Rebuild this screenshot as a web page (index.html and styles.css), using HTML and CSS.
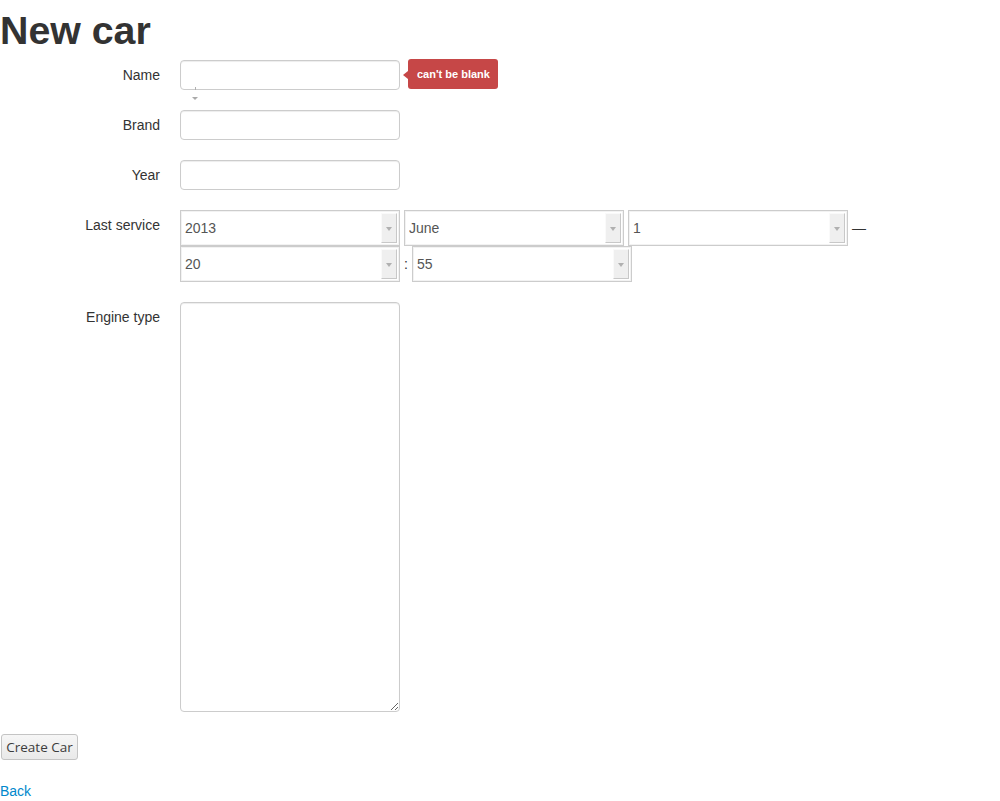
FILE: index.html
```html
<!DOCTYPE html>
<html>
<head>
<meta charset="utf-8">
<title>New car</title>
<link rel="stylesheet" href="styles.css">
</head>
<body>
<h1 class="title">New car</h1>
<form class="form">
  <div class="group">
    <label class="label">Name</label>
    <div class="controls">
      <input class="field" type="text">
      <span class="stray-tick"></span>
      <span class="stray-arrow"></span>
      <span class="tip">can't be blank</span>
    </div>
  </div>
  <div class="group">
    <label class="label">Brand</label>
    <div class="controls"><input class="field" type="text"></div>
  </div>
  <div class="group">
    <label class="label">Year</label>
    <div class="controls"><input class="field" type="text"></div>
  </div>
  <div class="group">
    <label class="label">Last service</label>
    <div class="controls">
      <div class="sel-row">
        <span class="sel"><select class="sel-box"><option>2013</option></select><span class="sel-btn"></span></span>
        <span class="sel"><select class="sel-box"><option>June</option></select><span class="sel-btn"></span></span>
        <span class="sel"><select class="sel-box"><option>1</option></select><span class="sel-btn"></span></span>
        <span class="sep">—</span>
      </div>
      <div class="sel-row">
        <span class="sel"><select class="sel-box"><option>20</option></select><span class="sel-btn"></span></span>
        <span class="sep">:</span>
        <span class="sel"><select class="sel-box"><option>55</option></select><span class="sel-btn"></span></span>
      </div>
    </div>
  </div>
  <div class="group">
    <label class="label">Engine type</label>
    <div class="controls"><textarea class="area"></textarea></div>
  </div>
  <div class="actions"><button class="btn" type="button">Create Car</button></div>
</form>
<p class="back-line"><a class="back" href="#">Back</a></p>
</body>
</html>
```
FILE: styles.css
```css
html, body {
  margin: 0;
  padding: 0;
  background: #fff;
}
body {
  font-family: "Liberation Sans", Arial, sans-serif;
  font-size: 14px;
  line-height: 20px;
  color: #333;
}
.title {
  margin: 10px 0;
  font-size: 39.3px;
  line-height: 40px;
  font-weight: bold;
  color: #333;
}
.form {
  margin: 0;
}
.group {
  display: grid;
  grid-template-columns: 160px 1fr;
  column-gap: 20px;
  margin-bottom: 20px;
}
.label {
  padding-top: 5px;
  text-align: right;
  color: #333;
}
.controls {
  position: relative;
}
.field {
  display: block;
  box-sizing: border-box;
  width: 220px;
  height: 30px;
  margin: 0;
  padding: 4px 6px;
  border: 1px solid #ccc;
  border-radius: 4px;
  box-shadow: inset 0 1px 1px rgba(0,0,0,0.075);
  font-family: "Liberation Sans", Arial, sans-serif;
  font-size: 14px;
  color: #555;
  background: #fff;
}
.stray-tick {
  position: absolute;
  left: 15px;
  top: 27px;
  width: 1px;
  height: 3px;
  background: #b0b0b0;
}
.stray-arrow {
  position: absolute;
  left: 12px;
  top: 37px;
  width: 0;
  height: 0;
  border-left: 3.5px solid transparent;
  border-right: 3.5px solid transparent;
  border-top: 3px solid #aaa;
}
.tip {
  position: absolute;
  left: 228px;
  top: -1px;
  height: 30px;
  padding: 0 8px 0 9px;
  box-sizing: border-box;
  width: 90px;
  background: #c64747;
  border-radius: 3px;
  color: #fff;
  font-weight: bold;
  font-size: 11px;
  line-height: 30px;
  white-space: nowrap;
}
.tip::before {
  content: "";
  position: absolute;
  left: -5px;
  top: 12px;
  border-top: 4px solid transparent;
  border-bottom: 4px solid transparent;
  border-right: 5px solid #c64747;
}
.sel-row {
  display: flex;
  align-items: center;
  gap: 4px;
}
.sel {
  position: relative;
  display: block;
  width: 220px;
  height: 36px;
}
.sel-box {
  -webkit-appearance: none;
  appearance: none;
  display: block;
  box-sizing: border-box;
  width: 220px;
  height: 36px;
  margin: 0;
  padding: 0 20px 0 4px;
  border: 1px solid #ccc;
  border-radius: 0;
  background: #fff;
  font-family: "Liberation Sans", Arial, sans-serif;
  font-size: 14px;
  color: #555;
  outline: 1px solid #f2f2f2;
  outline-offset: -2px;
}
.sel-btn {
  position: absolute;
  top: 3px;
  right: 3px;
  bottom: 3px;
  width: 14px;
  background: #efefef;
  border-top: 1px solid #fafafa;
  border-left: 1px solid #fafafa;
  border-right: 1px solid #c8c8c8;
  border-bottom: 1px solid #c8c8c8;
  pointer-events: none;
}
.sel-btn::after {
  content: "";
  position: absolute;
  left: 4px;
  top: 13px;
  border-left: 3px solid transparent;
  border-right: 3px solid transparent;
  border-top: 4px solid #b0b0b0;
}
.sep {
  color: #333;
  font-size: 14px;
  line-height: 20px;
}
.area {
  display: block;
  box-sizing: border-box;
  width: 220px;
  height: 410px;
  margin: 0;
  padding: 4px 6px;
  border: 1px solid #ccc;
  border-radius: 4px;
  box-shadow: inset 0 1px 1px rgba(0,0,0,0.075);
  font-family: "Liberation Sans", Arial, sans-serif;
  font-size: 14px;
  color: #555;
  background: #fff;
}
.actions {
  display: flex;
  padding-top: 2px;
}
.btn {
  box-sizing: border-box;
  height: 26px;
  width: 77px;
  margin: 0 0 0 1px;
  padding: 0;
  border: 1px solid #c4c4c4;
  border-radius: 3px;
  background: linear-gradient(#f6f6f6, #e9e9e9);
  font-family: "Open Sans", "DejaVu Sans", sans-serif;
  font-size: 13.5px;
  color: #3c3c3c;
  line-height: 24px;
}
.back-line {
  margin: 21px 0 0 0;
}
.back {
  color: #0088cc;
  text-decoration: none;
}
```
